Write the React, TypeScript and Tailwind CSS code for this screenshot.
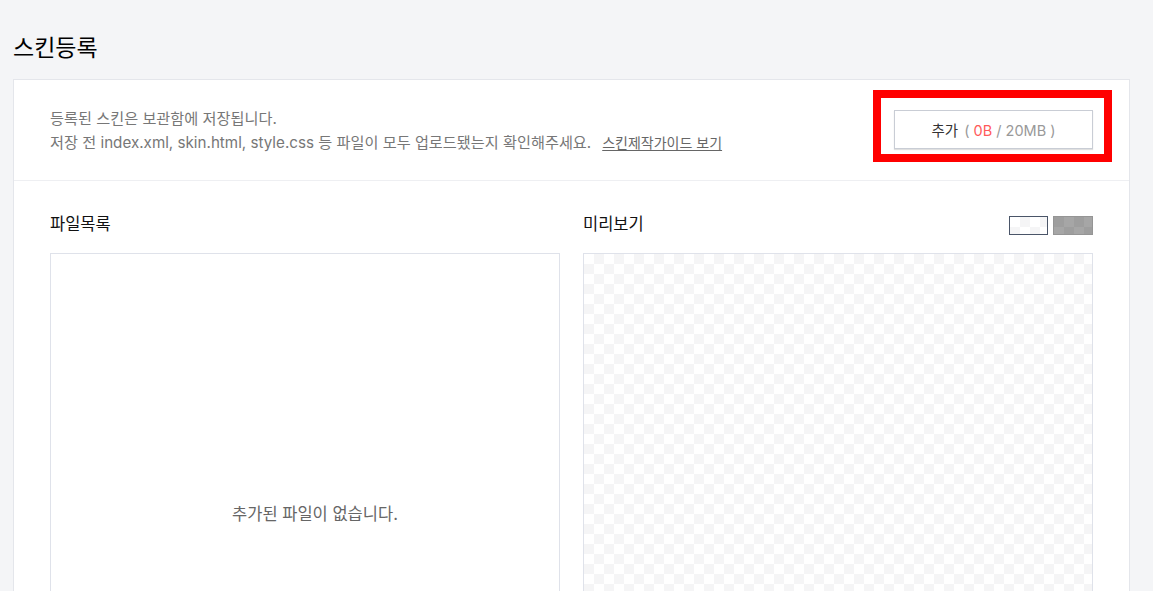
import React from "react";

const font = { fontFamily: 'Inter, "Noto Sans CJK KR", sans-serif' };

function Checker({ className = "" }: { className?: string }) {
    return (
        <div
            className={`bg-[repeating-conic-gradient(#f5f5f6_0_25%,#ffffff_0_50%)] [background-size:20px_20px] ${className}`}
        />
    );
}

export default function App() {
    return (
        <div style={font} className="min-h-screen bg-[#f4f5f7] pl-[13px] pt-[34px] overflow-hidden">
            <h1 className="text-[23px] leading-[28px] font-normal text-black mb-[17px]">스킨등록</h1>

            <div className="w-[1117px] border border-[#e4e6eb] bg-white">
                {/* upload notice */}
                <div className="h-[101px] flex items-start justify-between pl-[36px] pr-[36px] pt-[27px] border-b border-[#eeeff2]">
                    <div className="text-[15.2px] text-[#777]">
                        <p className="h-[24px] leading-[24px]">등록된 스킨은 보관함에 저장됩니다.</p>
                        <p className="h-[24px] leading-[24px]">
                            저장 전 index.xml, skin.html, style.css 등 파일이 모두 업로드됐는지 확인해주세요.
                            <a className="ml-[11px] text-[14px] underline underline-offset-2 text-[#666] cursor-pointer">스킨제작가이드 보기</a>
                        </p>
                    </div>
                    <div className="relative mt-[3px]">
                        <button
                            type="button"
                            className="w-[199px] h-[39px] border border-[#c9cdd5] bg-white shadow-[0_1px_1px_rgba(0,0,0,0.12)] text-[14.5px] text-[#333] pt-[2px]"
                        >
                            추가 <span className="text-[#999] ml-[2px]">(</span>
                            <span className="text-[#ff5a5a]"> 0B</span>
                            <span className="text-[#999]"> / 20MB )</span>
                        </button>
                        {/* annotation box */}
                        <div className="absolute -left-[21px] -right-[19px] -top-[20px] -bottom-[13px] border-[8px] border-[#ff0000] pointer-events-none" />
                    </div>
                </div>

                {/* files + preview */}
                <div className="grid grid-cols-2 gap-[23px] px-[36px] pt-[31px]">
                    <div>
                        <div className="h-[24px] flex items-center mb-[17px] text-[16.5px] text-[#111]">파일목록</div>
                        <div className="h-[522px] border border-[#dfe2ea] flex items-center justify-center pl-[20px] text-[16.5px] text-[#666]">
                            추가된 파일이 없습니다.
                        </div>
                    </div>
                    <div>
                        <div className="h-[24px] flex items-center justify-between mb-[17px]">
                            <span className="text-[16.5px] text-[#111]">미리보기</span>
                            <div className="flex gap-[5px] mt-[2px]">
                                <div className="w-[39px] h-[19px] border border-[#4a5568] bg-[repeating-conic-gradient(#f5f5f6_0_25%,#ffffff_0_50%)] [background-size:20px_20px]" />
                                <div className="w-[40px] h-[19px] border border-[#959595] bg-[repeating-conic-gradient(#a6a6a6_0_25%,#9e9e9e_0_50%)] [background-size:20px_20px]" />
                            </div>
                        </div>
                        <div className="h-[522px] border border-[#dfe2ea]">
                            <Checker className="w-full h-full" />
                        </div>
                    </div>
                </div>
            </div>
        </div>
    );
}
